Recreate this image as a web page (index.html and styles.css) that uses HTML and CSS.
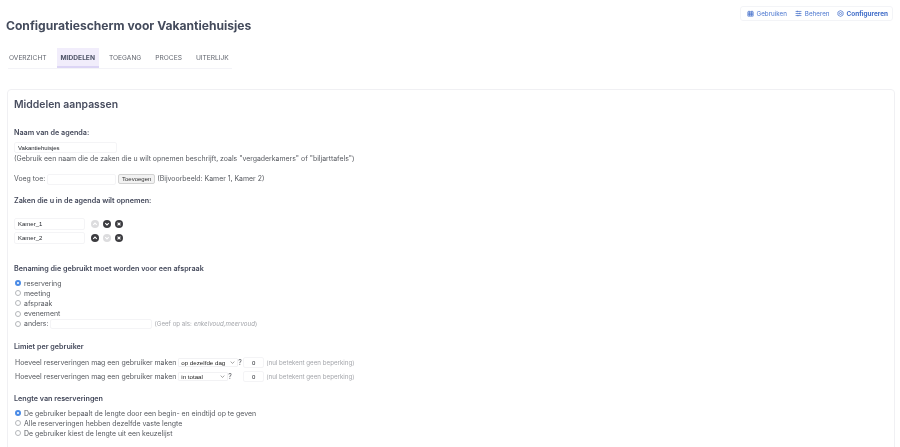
FILE: index.html
```html
<!DOCTYPE html>
<html lang="nl">

<head>
    <meta charset="UTF-8">
    <title>Configuratiescherm voor Vakantiehuisjes</title>
    <link rel="stylesheet" href="styles.css">
</head>

<body>
    <div class="page">

        <header class="top">
            <h1>Configuratiescherm voor Vakantiehuisjes</h1>
            <nav class="modes">
                <a href="#">
                    <svg viewBox="0 0 12 12"><path d="M1.5 3h9v7.5h-9z M1.5 5.5h9 M1.5 8h9 M4.5 3v7.5 M7.5 3v7.5 M3.5 1.2V3 M8.5 1.2V3"/></svg>
                    Gebruiken
                </a>
                <a href="#">
                    <svg viewBox="0 0 12 12"><path d="M1 2.5h10 M1 6h10 M1 9.5h10 M4 1.2v2.6 M8 4.7v2.6 M5 8.2v2.6"/></svg>
                    Beheren
                </a>
                <a href="#" class="current">
                    <svg viewBox="0 0 12 12"><path d="M6 .9l4.4 2.5v5.2L6 11.1 1.6 8.6V3.4z"/><circle cx="6" cy="6" r="1.8"/></svg>
                    Configureren
                </a>
            </nav>
        </header>

        <!-- Tabs -->
        <ul class="tabs">
            <li><a href="#">OVERZICHT</a></li>
            <li><a href="#" class="active">MIDDELEN</a></li>
            <li><a href="#">TOEGANG</a></li>
            <li><a href="#">PROCES</a></li>
            <li><a href="#">UITERLIJK</a></li>
        </ul>

        <main class="card">
            <h2>Middelen aanpassen</h2>

            <h3>Naam van de agenda:</h3>
            <input type="text" class="field name-field" value="Vakantiehuisjes">
            <p class="line">(Gebruik een naam die de zaken die u wilt opnemen beschrijft, zoals "vergaderkamers" of "biljarttafels")</p>

            <p class="line add-row">
                Voeg toe:
                <input type="text" class="field add-field">
                <button class="add-btn">Toevoegen</button>
                (Bijvoorbeeld: Kamer 1, Kamer 2)
            </p>

            <h3 class="items-title">Zaken die u in de agenda wilt opnemen:</h3>
            <div class="items">
                <div class="item">
                    <input type="text" class="field item-field" value="Kamer_1">
                    <span class="round off"><svg viewBox="0 0 10 10"><path d="M2.8 6l2.2-2.2L7.2 6"/></svg></span>
                    <span class="round"><svg viewBox="0 0 10 10"><path d="M2.8 4l2.2 2.2L7.2 4"/></svg></span>
                    <span class="round"><svg viewBox="0 0 10 10"><path d="M3.2 3.2l3.6 3.6 M6.8 3.2L3.2 6.8"/></svg></span>
                </div>
                <div class="item">
                    <input type="text" class="field item-field" value="Kamer_2">
                    <span class="round"><svg viewBox="0 0 10 10"><path d="M2.8 6l2.2-2.2L7.2 6"/></svg></span>
                    <span class="round off"><svg viewBox="0 0 10 10"><path d="M2.8 4l2.2 2.2L7.2 4"/></svg></span>
                    <span class="round"><svg viewBox="0 0 10 10"><path d="M3.2 3.2l3.6 3.6 M6.8 3.2L3.2 6.8"/></svg></span>
                </div>
            </div>

            <h3 class="naming-title">Benaming die gebruikt moet worden voor een afspraak</h3>
            <div class="radios">
                <label><input type="radio" name="naming" checked> reservering</label>
                <label><input type="radio" name="naming"> meeting</label>
                <label><input type="radio" name="naming"> afspraak</label>
                <label><input type="radio" name="naming"> evenement</label>
                <label>
                    <input type="radio" name="naming"> anders:
                    <input type="text" class="field other-field">
                    <span class="note">(Geef op als: <em>enkelvoud,meervoud</em>)</span>
                </label>
            </div>

            <h3 class="limit-title">Limiet per gebruiker</h3>
            <div class="limit-row">
                Hoeveel reserveringen mag een gebruiker maken
                <span class="limit-choice">
                    <select class="limit-select day">
                        <option>op dezelfde dag</option>
                    </select>?
                </span>
                <input type="text" class="field count" value="0">
                <span class="note">(nul betekent geen beperking)</span>
            </div>
            <div class="limit-row">
                Hoeveel reserveringen mag een gebruiker maken
                <span class="limit-choice">
                    <select class="limit-select total">
                        <option>in totaal</option>
                    </select>?
                </span>
                <input type="text" class="field count" value="0">
                <span class="note">(nul betekent geen beperking)</span>
            </div>

            <h3 class="length-title">Lengte van reserveringen</h3>
            <div class="radios">
                <label><input type="radio" name="length" checked> De gebruiker bepaalt de lengte door een begin- en eindtijd op te geven</label>
                <label><input type="radio" name="length"> Alle reserveringen hebben dezelfde vaste lengte</label>
                <label><input type="radio" name="length"> De gebruiker kiest de lengte uit een keuzelijst</label>
            </div>
        </main>

    </div>
</body>

</html>
```

FILE: styles.css
```css
html,
body {
    margin: 0;
    padding: 0;
    background-color: #fff;
}

body {
    font-family: Inter, "Liberation Sans", sans-serif;
    font-size: 6.93px;
    color: #56595f;
}

.page {
    height: 447px;
    overflow: hidden;
    box-sizing: border-box;
    padding: 0 5px 0 7px;
    will-change: transform;
}

.top {
    display: flex;
    justify-content: space-between;
    align-items: flex-start;
    height: 48px;
    margin-left: -1px;
}

.top h1 {
    margin: 18px 0 0;
    font-size: 12.1px;
    line-height: 16px;
    font-weight: 700;
    color: #444b5c;
}

.modes {
    display: flex;
    gap: 8px;
    height: 13px;
    margin: 6px 2px 0 0;
    padding: 0 4px 0 6px;
    align-items: center;
    border: 1px solid #f3f4f7;
    border-radius: 3px;
    font-size: 6.25px;
}

.modes a {
    display: flex;
    align-items: center;
    gap: 3px;
    color: #4a76cf;
    text-decoration: none;
}

.modes a.current {
    margin-left: -1px;
    font-size: 6.4px;
    font-weight: 700;
    color: #3f6cc8;
}

.modes svg {
    width: 7px;
    height: 7px;
    fill: none;
    stroke: #3f6cc8;
    stroke-width: 1.2;
}

.tabs {
    display: flex;
    width: 224px;
    height: 20px;
    margin: 0 0 20px 1px;
    padding: 0;
    list-style: none;
    border-bottom: 1px solid #f3f3f7;
    font-size: 6.62px;
}

.tabs a {
    display: block;
    box-sizing: border-box;
    height: 20px;
    padding: 0 4px;
    margin-right: 6px;
    line-height: 20px;
    color: #60646d;
    text-decoration: none;
}

.tabs li:first-child a {
    padding-left: 1px;
}

.tabs a.active {
    font-weight: 700;
    color: #4f5568;
    background-color: #f1edfb;
    border-bottom: 2px solid #dcd5f5;
}

.card {
    box-sizing: border-box;
    height: 500px;
    padding: 8px 6px;
    border: 1px solid #f0f0f3;
    border-radius: 4px;
}

.card h2 {
    margin: 0 0 16px;
    font-size: 10.4px;
    line-height: 14px;
    font-weight: 600;
    color: #484d5f;
}

.card h3 {
    margin: 0;
    font-size: 7.2px;
    line-height: 10px;
    font-weight: 600;
    color: #43485a;
}

.line {
    margin: 0;
    line-height: 10px;
}

.field {
    box-sizing: border-box;
    height: 11px;
    padding: 0 3px;
    border: 1px solid #f4f4f6;
    border-radius: 2px;
    background: #fff;
    font-family: "Liberation Sans", sans-serif;
    font-size: 6px;
    color: #22252b;
    outline: none;
}

.name-field {
    display: block;
    width: 103px;
    margin: 4px 0 1px;
}

.add-row {
    display: flex;
    align-items: center;
    gap: 2px;
    margin-top: 9px;
    height: 12px;
}

.add-field {
    width: 69px;
}

.add-btn {
    height: 10px;
    width: 37px;
    padding: 0;
    border: 1px solid #d2d2d2;
    border-radius: 2px;
    background-color: #f2f2f2;
    font-family: "Liberation Sans", sans-serif;
    font-size: 6px;
    color: #333;
}

.card .items-title {
    margin-top: 11px;
}

.items {
    margin-top: 11px;
}

.item {
    display: flex;
    align-items: center;
    gap: 4px;
    height: 14px;
}

.item-field {
    width: 71px;
    height: 12px;
    margin-right: 2px;
}

.round {
    display: block;
    width: 8px;
    height: 8px;
    border-radius: 50%;
    background-color: #3c3c40;
}

.round svg {
    display: block;
    width: 8px;
    height: 8px;
    fill: none;
    stroke: #fff;
    stroke-width: 1.3;
}

.round.off {
    background-color: #dcdcde;
}

.card .naming-title {
    margin-top: 19px;
}

.radios {
    margin-top: 4px;
}

.radios label {
    display: flex;
    align-items: center;
    height: 10.2px;
    white-space: nowrap;
}

.radios input[type="radio"] {
    appearance: none;
    box-sizing: border-box;
    width: 6px;
    height: 6px;
    margin: 0 3px 0 1px;
    border: 0.7px solid #b4b6ba;
    border-radius: 50%;
    background-color: #fff;
}

.radios input[type="radio"]:checked {
    border: 2.1px solid #4a8be6;
}

.other-field {
    width: 102px;
    height: 10px;
    margin-left: 1px;
}

.note {
    margin-left: 3px;
    font-size: 6.2px;
    color: #a4a6ab;
}

.limit-row .note {
    margin-left: 2px;
}

.card .limit-title {
    margin-top: 13px;
    margin-bottom: 4px;
}

.limit-row {
    display: flex;
    align-items: center;
    height: 14px;
    padding-left: 1px;
}

.limit-choice {
    display: flex;
    align-items: center;
    width: 65px;
    margin-left: 2px;
}

.limit-select {
    appearance: none;
    box-sizing: border-box;
    height: 9px;
    padding: 0 0 0 2px;
    border: 1px solid #f2f2f4;
    border-radius: 1px;
    background: #fff url("data:image/svg+xml,%3Csvg xmlns='http://www.w3.org/2000/svg' viewBox='0 0 6 4'%3E%3Cpath d='M.5.8L3 3.2 5.5.8' fill='none' stroke='%23666' stroke-width='.8'/%3E%3C/svg%3E") no-repeat right 2px center / 5px 3px;
    font-family: "Liberation Sans", sans-serif;
    font-size: 6.2px;
    color: #222;
}

.limit-select.day {
    width: 60px;
}

.limit-select.total {
    width: 50px;
}

.count {
    width: 21px;
    text-align: center;
}

.card .length-title {
    margin-top: 10px;
}
```
